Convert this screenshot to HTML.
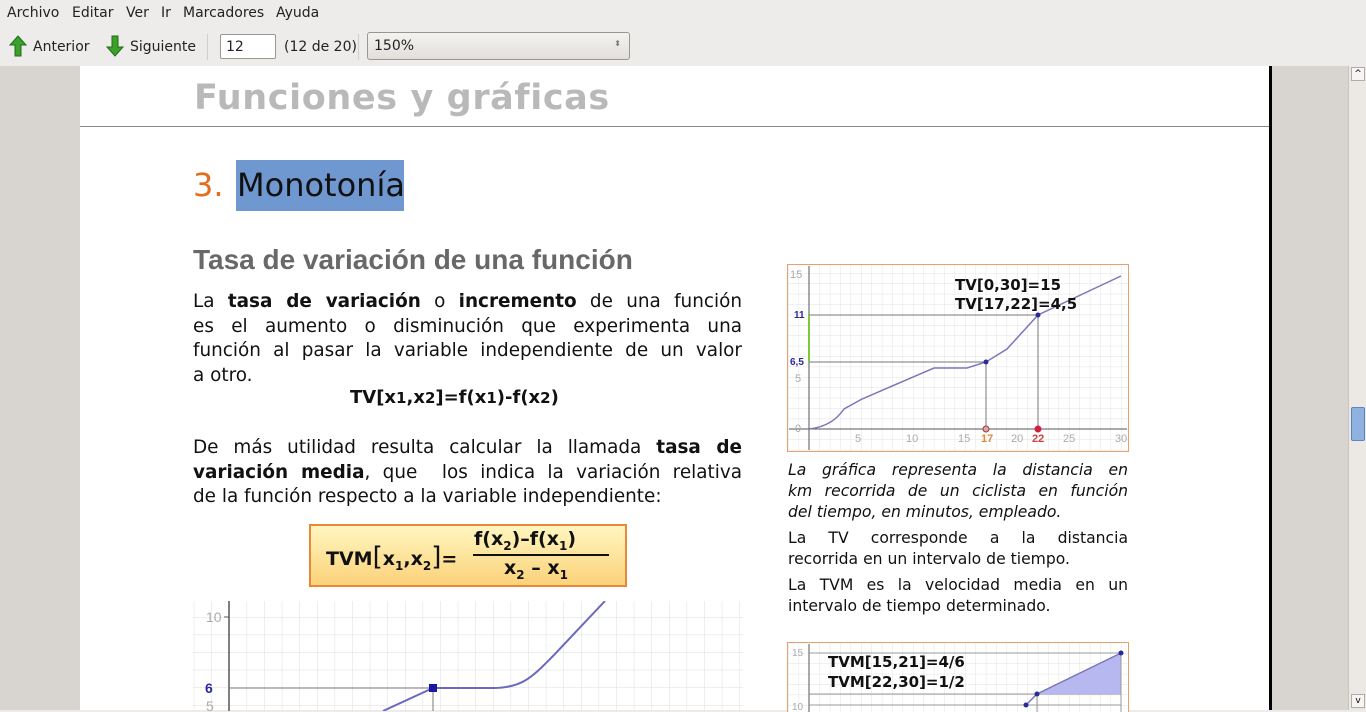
<!DOCTYPE html>
<html><head><meta charset="utf-8"><style>
*{margin:0;padding:0;box-sizing:border-box}
body{width:1366px;height:710px;overflow:hidden;background:#edeceb;font-family:"DejaVu Sans","Liberation Sans",sans-serif;position:relative}
.abs{position:absolute}
.menu{top:0;left:0;height:28px;width:1366px;font-size:14px;color:#222}
.menu span{position:absolute;top:5px}
.tb{top:28px;left:0;height:38px;width:1366px;font-size:14px;color:#222}
#page{left:80px;top:66px;width:1189px;height:644px;background:#fff}
.body{font-size:18.4px;line-height:24.5px;color:#111}
.body span,.cap span{display:block;text-align:justify;text-align-last:justify;white-space:nowrap}
.body span.l,.cap span.l{text-align-last:left}
.cap{font-size:15.6px;line-height:21px;color:#111}
</style></head><body>
<div class="abs menu">
<span style="left:7px">Archivo</span><span style="left:72px">Editar</span><span style="left:126px">Ver</span><span style="left:161px">Ir</span><span style="left:183px">Marcadores</span><span style="left:276px">Ayuda</span>
</div>
<div class="abs tb">
<svg class="abs" style="left:9px;top:7px" width="18" height="22" viewBox="0 0 18 22"><path d="M9 1 L17 10 H12 V21 H6 V10 H1 Z" fill="#3ca02a" stroke="#1e6e16"/></svg>
<span class="abs" style="left:33px;top:11px">Anterior</span>
<svg class="abs" style="left:106px;top:7px" width="18" height="22" viewBox="0 0 18 22"><path d="M9 21 L17 12 H12 V1 H6 V12 H1 Z" fill="#3ca02a" stroke="#1e6e16"/></svg>
<span class="abs" style="left:130px;top:11px">Siguiente</span>
<div class="abs" style="left:207px;top:6px;width:1px;height:26px;background:#d3d0cc"></div>
<div class="abs" style="left:220px;top:6px;width:56px;height:25px;background:#fff;border:1px solid #9a9690;border-radius:2px;padding:4px 0 0 5px">12</div>
<span class="abs" style="left:284px;top:11px">(12 de 20)</span>
<div class="abs" style="left:358px;top:6px;width:1px;height:26px;background:#d3d0cc"></div>
<div class="abs" style="left:367px;top:4px;width:263px;height:28px;background:linear-gradient(#f4f3f1,#e2dfdb);border:1px solid #9a9690;border-radius:3px;padding:5px 0 0 6px">150%<span class="abs" style="right:8px;top:6px;font-size:8px;color:#777">⬍</span></div>
</div>
<div class="abs" style="left:0;top:66px;width:80px;height:644px;background:#d8d4d0"></div>
<div class="abs" style="left:1269px;top:66px;width:3px;height:644px;background:#000"></div>
<div class="abs" style="left:1272px;top:66px;width:76px;height:644px;background:#d8d4d0"></div>
<div class="abs" style="left:1348px;top:66px;width:18px;height:644px;background:#ece9e5;border-left:1px solid #c8c4bf"></div>
<div class="abs" style="left:1351px;top:67px;width:14px;height:14px;border:1px solid #b0aca7;background:#f6f5f3;font-size:9px;text-align:center;line-height:12px">^</div>
<div class="abs" style="left:1351px;top:407px;width:14px;height:34px;background:#8fb2e0;border:1px solid #5b84bd;border-radius:2px"></div>
<div class="abs" style="left:1351px;top:694px;width:14px;height:14px;border:1px solid #b0aca7;background:#f6f5f3;font-size:9px;text-align:center;line-height:12px">v</div>

<div class="abs" id="page">
<div class="abs" style="left:114px;top:12px;font-weight:bold;font-size:35px;color:#b9b9b9;letter-spacing:0.6px">Funciones y gráficas</div>
<div class="abs" style="left:0;top:60px;width:1189px;height:1px;background:#888"></div>
<div class="abs" style="left:156px;top:94px;width:168px;height:51px;background:#6f98d0"></div>
<div class="abs" style="left:113px;top:100px;font-size:32px;color:#e46c1c">3.</div>
<div class="abs" style="left:157px;top:100px;font-size:32px;color:#111">Monotonía</div>
<div class="abs" style="left:113px;top:178px;font-family:'Liberation Sans',sans-serif;font-weight:bold;font-size:28px;color:#686868">Tasa de variación de una función</div>
<div class="abs body" style="left:113px;top:224px;width:549px"><span>La <b>tasa de variación</b> o <b>incremento</b> de una función</span><span>es el aumento o disminución que experimenta una</span><span>función al pasar la variable independiente de un valor</span><span class="l">a otro.</span></div>
<div class="abs" style="left:270px;top:321px;font-size:18px;font-weight:bold;color:#111">TV[x<small>1</small>,x<small>2</small>]=f(x<small>1</small>)-f(x<small>2</small>)</div>
<div class="abs body" style="left:113px;top:370px;width:549px"><span>De más utilidad resulta calcular la llamada <b>tasa de</b></span><span><b>variación media</b>, que&nbsp; los indica la variación relativa</span><span class="l">de la función respecto a la variable independiente:</span></div>
<div class="abs" style="left:229px;top:458px;width:318px;height:63px;background:linear-gradient(#fff6c0,#fbd27a);border:2px solid #e8893a"></div>
<div class="abs" style="left:246px;top:476px;font-size:19px;font-weight:bold;color:#111">TVM<span style="font-size:26px;font-weight:normal">[</span>x<sub style="font-size:12px">1</sub>,x<sub style="font-size:12px">2</sub><span style="font-size:26px;font-weight:normal">]</span>=</div>
<div class="abs" style="left:394px;top:462px;font-size:19px;font-weight:bold;color:#111">f(x<sub style="font-size:12px">2</sub>)–f(x<sub style="font-size:12px">1</sub>)</div>
<div class="abs" style="left:393px;top:488px;width:136px;height:2px;background:#111"></div>
<div class="abs" style="left:424px;top:491px;font-size:19px;font-weight:bold;color:#111">x<sub style="font-size:12px">2</sub> – x<sub style="font-size:12px">1</sub></div>

<svg class="abs" style="left:707px;top:198px" width="342" height="188" viewBox="0 0 342 188">
<defs><pattern id="g" width="10.4" height="10.4" patternUnits="userSpaceOnUse" x="22" y="165"><path d="M0 0H10.4M0 0V10.4" stroke="#e3e3e3" stroke-width="1"/></pattern></defs>
<rect x="0.5" y="0.5" width="341" height="187" fill="#fff" stroke="#e8a070"/>
<rect x="1" y="1" width="340" height="186" fill="url(#g)"/>
<line x1="22" y1="2" x2="22" y2="186" stroke="#555"/>
<line x1="2" y1="165" x2="340" y2="165" stroke="#555"/>
<line x1="22" y1="51" x2="251" y2="51" stroke="#777"/>
<line x1="22" y1="98" x2="199" y2="98" stroke="#777"/>
<line x1="199" y1="98" x2="199" y2="165" stroke="#777"/>
<line x1="251" y1="51" x2="251" y2="165" stroke="#777"/>
<line x1="22" y1="51" x2="22" y2="98" stroke="#7ec83a" stroke-width="2"/>
<path d="M22 165 C40 163 50 155 57 145 L75 135 L147 104 L180 104 L199 98 L220 85 L251 51 L334 12" fill="none" stroke="#7a78b8" stroke-width="1.5"/>
<circle cx="199" cy="98" r="2.5" fill="#2a2a9a"/><circle cx="251" cy="51" r="2.5" fill="#2a2a9a"/>
<circle cx="199" cy="165" r="3" fill="#e8a0a0" stroke="#844"/><circle cx="251" cy="165" r="3.5" fill="#d02040"/>
<g font-size="11" fill="#aaa" font-family="Liberation Sans"><text x="3" y="14">15</text><text x="8" y="118">5</text><text x="8" y="168">0</text><text x="68" y="178">5</text><text x="119" y="178">10</text><text x="171" y="178">15</text><text x="224" y="178">20</text><text x="276" y="178">25</text><text x="328" y="178">30</text></g>
<g font-size="10" font-weight="bold" fill="#2a2a9a" font-family="Liberation Sans"><text x="7" y="54">11</text><text x="3" y="101">6,5</text></g>
<g font-size="11" font-weight="bold" font-family="Liberation Sans"><text x="194" y="178" fill="#e0883a">17</text><text x="245" y="178" fill="#d04040">22</text></g>
<g font-size="15" font-weight="bold" fill="#111"><text x="168" y="26">TV[0,30]=15</text><text x="168" y="45">TV[17,22]=4,5</text></g>
</svg>
<div class="abs cap" style="left:708px;top:394px;width:340px;font-style:italic"><span>La gráfica representa la distancia en</span><span>km recorrida de un ciclista en función</span><span class="l">del tiempo, en minutos, empleado.</span></div>
<div class="abs cap" style="left:708px;top:462px;width:340px"><span>La TV corresponde a la distancia</span><span class="l">recorrida en un intervalo de tiempo.</span></div>
<div class="abs cap" style="left:708px;top:509px;width:340px"><span>La TVM es la velocidad media en un</span><span class="l">intervalo de tiempo determinado.</span></div>

<svg class="abs" style="left:707px;top:576px" width="342" height="70" viewBox="0 0 342 70">
<defs><pattern id="g2" width="10.4" height="10.4" patternUnits="userSpaceOnUse" x="22" y="11"><path d="M0 0H10.4M0 0V10.4" stroke="#e3e3e3"/></pattern></defs>
<rect x="0.5" y="0.5" width="341" height="70" fill="#fff" stroke="#e8a070"/>
<rect x="1" y="1" width="340" height="69" fill="url(#g2)"/>
<line x1="22" y1="2" x2="22" y2="70" stroke="#555"/>
<line x1="22" y1="11" x2="334" y2="11" stroke="#999"/>
<line x1="22" y1="52" x2="334" y2="52" stroke="#999"/>
<line x1="22" y1="63" x2="334" y2="63" stroke="#999"/>
<path d="M250 52 L334 11 L334 52 Z" fill="#b8b8f0"/>
<path d="M238 64 L250 52 L334 11" fill="none" stroke="#7a78b8" stroke-width="1.5"/>
<line x1="334" y1="11" x2="334" y2="70" stroke="#999"/>
<line x1="250" y1="52" x2="250" y2="70" stroke="#999"/>
<circle cx="334" cy="11" r="2.5" fill="#2a2a9a"/><circle cx="250" cy="52" r="2.5" fill="#2a2a9a"/><circle cx="239" cy="63" r="2.5" fill="#2a2a9a"/>
<g font-size="10" fill="#aaa" font-family="Liberation Sans"><text x="5" y="14">15</text><text x="5" y="68">10</text></g>
<g font-size="15" font-weight="bold" fill="#111"><text x="41" y="25">TVM[15,21]=4/6</text><text x="41" y="45">TVM[22,30]=1/2</text></g>
</svg>

<svg class="abs" style="left:113px;top:535px" width="550" height="110" viewBox="0 0 550 110">
<defs><pattern id="g3" width="17.6" height="17.6" patternUnits="userSpaceOnUse" x="36" y="16"><path d="M0 0H17.6M0 0V17.6" stroke="#ddd"/></pattern></defs>
<rect width="550" height="110" fill="url(#g3)"/>
<line x1="36" y1="0" x2="36" y2="110" stroke="#555" stroke-width="1.5"/>
<line x1="31" y1="16" x2="36" y2="16" stroke="#555"/>
<line x1="36" y1="87" x2="240" y2="87" stroke="#777"/>
<line x1="240" y1="87" x2="240" y2="110" stroke="#777"/>
<path d="M190 110 L240 87 L300 87 C330 87 340 75 360 55 L412 0" fill="none" stroke="#6a68c0" stroke-width="2"/>
<rect x="236" y="83" width="8" height="8" fill="#1a1aa0"/>
<g font-size="14" fill="#aaa" font-family="Liberation Sans"><text x="13" y="21">10</text><text x="13" y="110">5</text></g>
<text x="12" y="92" font-size="14" font-weight="bold" fill="#2a2aa0" font-family="Liberation Sans">6</text>
</svg>
</div>
</body></html>
